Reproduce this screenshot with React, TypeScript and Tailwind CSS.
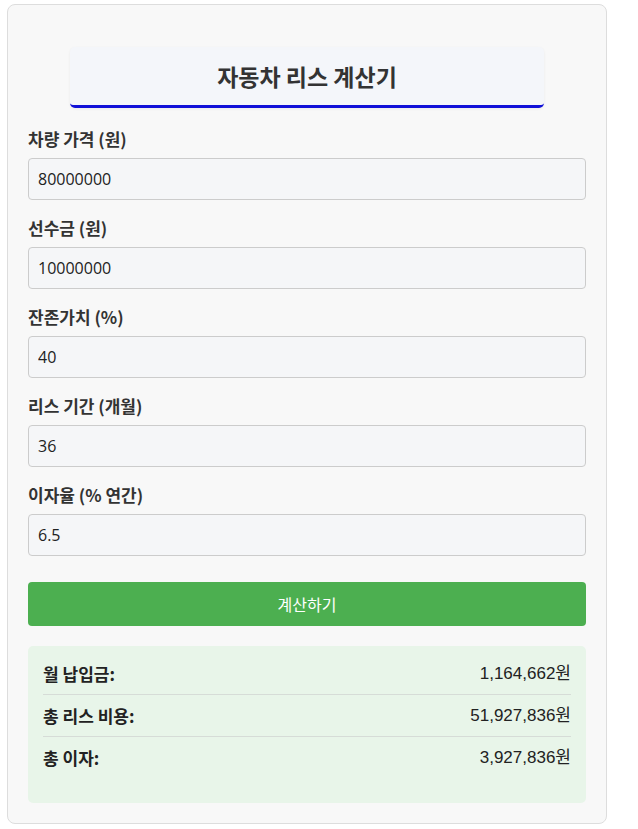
import { useState } from 'react';

const fields = [
  { label: '차량 가격 (원)', value: '80000000' },
  { label: '선수금 (원)', value: '10000000' },
  { label: '잔존가치 (%)', value: '40' },
  { label: '리스 기간 (개월)', value: '36' },
  { label: '이자율 (% 연간)', value: '6.5' },
];

const results = [
  { label: '월 납입금:', value: '1,164,662원' },
  { label: '총 리스 비용:', value: '51,927,836원' },
  { label: '총 이자:', value: '3,927,836원' },
];

export default function App() {
  const [values, setValues] = useState(fields.map((f) => f.value));

  return (
    <div className="min-h-[829px] bg-white pt-[4px] pl-[7px] font-['Noto_Sans_CJK_KR',sans-serif]">
      <div className="w-[600px] rounded-[8px] border border-[#dddddd] bg-[#f8f8f8] px-[20px] pt-[42px] pb-[20px]">
        <div className="mx-auto w-[474px] rounded-[5px] border-b-[3px] border-[#1010d8] bg-[#f4f6fa] py-[13px] text-center shadow-[0_1px_3px_rgba(0,0,0,0.06)]">
          <h1 className="text-[23px] font-bold leading-[32px] text-[#333333]">자동차 리스 계산기</h1>
        </div>

        <div className="mt-[19px] flex flex-col gap-[16px]">
          {fields.map((f, i) => (
            <div key={f.label} className="flex flex-col gap-[7px]">
              <label className="text-[17px] font-bold leading-[24px] text-[#333333]">{f.label}</label>
              <input
                value={values[i]}
                onChange={(e) => {
                  const next = [...values];
                  next[i] = e.target.value;
                  setValues(next);
                }}
                className="h-[42px] w-full rounded-[4px] border border-[#cccccc] bg-[#f5f6f8] px-[9px] font-['Open_Sans','Noto_Sans_CJK_KR',sans-serif] text-[16px] text-[#222222] outline-none"
              />
            </div>
          ))}
        </div>

        <button className="mt-[26px] h-[44px] w-full rounded-[4px] bg-[#4caf50] text-[16px] text-white">
          계산하기
        </button>

        <div className="mt-[20px] rounded-[5px] bg-[#e8f5e9] px-[15px] pt-[7px] pb-[25px]">
          {results.map((r, i) => (
            <div
              key={r.label}
              className={`flex items-center justify-between py-[9px] leading-[23px] ${
                i < results.length - 1 ? 'border-b border-[#d6dcd7]' : ''
              }`}
            >
              <span className="text-[17px] font-bold text-[#222222]">{r.label}</span>
              <span className="font-['Liberation_Sans','Noto_Sans_CJK_KR',sans-serif] text-[17px] text-[#222222]">
                {r.value}
              </span>
            </div>
          ))}
        </div>
      </div>
    </div>
  );
}
